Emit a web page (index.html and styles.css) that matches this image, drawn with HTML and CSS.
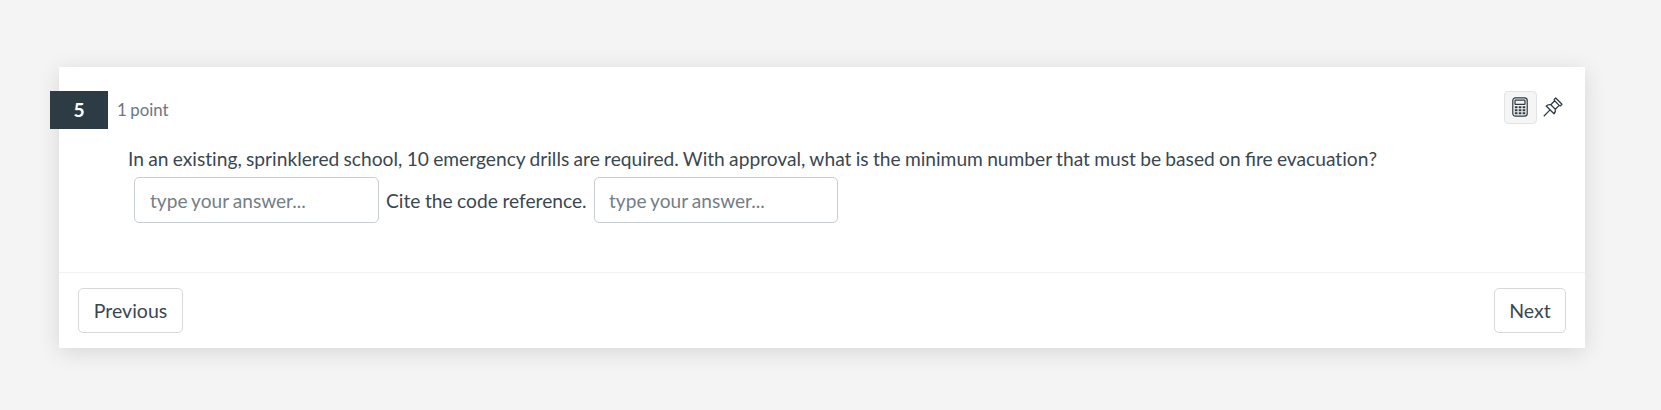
FILE: index.html
```html
<!DOCTYPE html>
<html lang="en">
<head>
<meta charset="utf-8">
<title>Question 5</title>
<link rel="stylesheet" href="styles.css">
</head>
<body>
<main class="card">
  <header class="card-header">
    <span class="number">5</span>
    <span class="points">1 point</span>
    <div class="tools">
      <button class="tool tool-active" aria-label="Calculator">
        <svg width="16" height="20" viewBox="0 0 16 20" fill="none" stroke="#2d3b45" stroke-width="1.2">
          <rect x=".8" y=".8" width="14.4" height="18.4" rx="2.6"/>
          <rect x="3" y="3.2" width="10" height="4.2" rx=".5"/>
          <path d="M2.8 10.3h2.7M6.7 10.3h2.7M10.6 10.3h2.7M2.8 13.3h2.7M6.7 13.3h2.7M10.6 13.3h2.7M2.8 16.2h2.7M6.7 16.2h2.7M10.6 16.2h2.7" stroke-width="2"/>
        </svg>
      </button>
      <button class="tool" aria-label="Pin question">
        <svg width="20" height="20" viewBox="0 0 20 20" fill="none" stroke="#2d3b45" stroke-width="1.25" stroke-linejoin="round">
          <path d="M12.7 1 19 7.3 17.5 8.8 16.2 8.4 12.3 12.2Q13 14.7 11 16.8L3.2 9Q5.3 7 7.8 7.7L11.6 3.8 11.2 2.5ZM11.6 3.8 16.2 8.4M7.8 7.7 12.3 12.2M7.1 12.9.8 19.2"/>
        </svg>
      </button>
    </div>
  </header>
  <section class="question">
    <p class="prompt">In an <span class="plain">existing</span>, sprinklered school, 10 emergency drills are required. With approval, what is the minimum number that must be based on fire <span class="plain">evacuation</span>?</p>
    <div class="answers">
      <input class="answer" type="text" placeholder="type your answer...">
      <span class="cite">Cite the code reference.</span>
      <input class="answer answer-last" type="text" placeholder="type your answer...">
    </div>
  </section>
  <footer class="card-footer">
    <button class="nav">Previous</button>
    <button class="nav nav-next">Next</button>
  </footer>
</main>
</body>
</html>
```

FILE: styles.css
```css
* { box-sizing: border-box; }
body {
  margin: 0;
  min-height: 100vh;
  padding: 67px 76px 0 59px;
  background: #f4f4f4;
  color: #3a4750;
  font-family: Lato, sans-serif;
  font-size: 19.2px;
}
button, input { font: inherit; color: inherit; margin: 0; }
.card {
  height: 281px;
  display: flex;
  flex-direction: column;
  background: #fff;
  border-radius: 1px;
  box-shadow: 0 4px 22px rgba(0, 0, 0, .12);
}
.card-header {
  display: flex;
  align-items: flex-start;
  height: 71px;
  margin-left: -9px;
  padding: 24px 15px 0 0;
}
.number {
  width: 58px;
  height: 38px;
  background: #2d3b45;
  color: #fff;
  font-weight: 700;
  line-height: 38px;
  text-align: center;
}
.points {
  margin-left: 9px;
  color: #6b7780;
  font-size: 16.8px;
  line-height: 38px;
  word-spacing: -.8px;
}
.tools { display: flex; margin-left: auto; }
.tool {
  display: flex;
  align-items: center;
  justify-content: center;
  width: 33px;
  height: 33px;
  padding: 0 1px 1px 0;
  border: 1px solid transparent;
  border-radius: 4px;
  background: none;
}
.tool-active { background: #f5f5f5; border-color: #e1e4e6; }
.question { flex: 1; padding-left: 69px; }
.prompt {
  margin: 0;
  height: 39px;
  font-size: 19.2px;
  line-height: 42px;
  white-space: nowrap;
  word-spacing: -.63px;
}
.plain { font-variant-ligatures: none; }
.answers { display: flex; align-items: center; padding-left: 6px; }
.answer {
  width: 245px;
  height: 46px;
  padding: 0 15px;
  border: 1px solid #c7cdd1;
  border-radius: 5px;
  background: #fff;
  font-size: 19.1px;
  word-spacing: -.8px;
}
.answer-last { width: 244px; padding-left: 14px; }
.answer::placeholder { color: #737e86; opacity: 1; }
.cite { width: 215px; padding-left: 7px; font-size: 19.2px; word-spacing: -.4px; white-space: nowrap; }
.card-footer {
  display: flex;
  align-items: flex-start;
  justify-content: space-between;
  height: 76px;
  padding: 15px 19px 0;
  border-top: 1px solid #f0f1f1;
}
.nav {
  width: 105px;
  height: 45px;
  padding: 0;
  border: 1px solid #d5d9dc;
  border-radius: 5px;
  background: #fff;
  font-size: 19.5px;
}
.nav-next { width: 72px; }
```
